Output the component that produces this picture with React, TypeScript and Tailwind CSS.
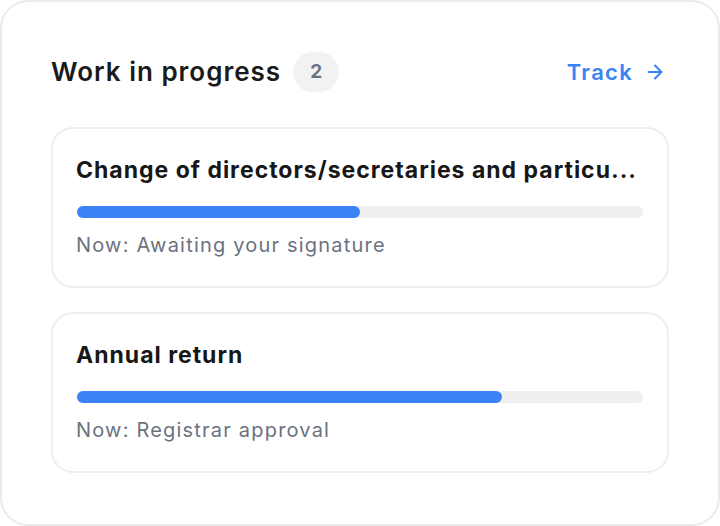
import { ArrowRight } from 'lucide-react'

const items = [
  { title: 'Change of directors/secretaries and particu...', status: 'Awaiting your signature', pct: 50 },
  { title: 'Annual return', status: 'Registrar approval', pct: 75 },
]

export default function App() {
  return (
    <div className="w-[720px] h-[526px] bg-white" style={{ fontFamily: 'Inter, "Noto Sans", sans-serif' }}>
      <div className="h-full box-border border-2 border-[#ebebeb] rounded-[28px] px-[49px] pt-[50px]">
        {/* Header */}
        <div className="flex items-center justify-between h-[40px]">
          <div className="flex items-center gap-[12px]">
            <h2 className="text-[26px] font-semibold text-[#1a1a1a] tracking-[1px] -mt-[2px]">Work in progress</h2>
            <span className="w-[46px] h-[40px] rounded-full bg-[#f2f2f2] flex items-center justify-center text-[19px] font-bold text-[#6b7280]">
              2
            </span>
          </div>
          <button className="flex items-center gap-[11px] text-[#3b82f6] text-[22px] font-semibold tracking-[1.3px] mr-[3px]">
            Track
            <ArrowRight className="w-[22px] h-[22px]" strokeWidth={2.25} />
          </button>
        </div>

        {/* Items */}
        <div className="mt-[35px] flex flex-col gap-[24px]">
          {items.map((item) => (
            <div key={item.title} className="border-2 border-[#eeeeee] rounded-[22px] h-[161px] box-border px-[23px] pt-[23px]">
              <div className="text-[23px] leading-[36px] font-bold text-[#171717] tracking-[1px] whitespace-nowrap">{item.title}</div>
              <div className="mt-[18px] h-[12px] rounded-full bg-[#efefef] mx-[1px]">
                <div className="h-[12px] rounded-full bg-[#3b82f6]" style={{ width: `${item.pct}%` }} />
              </div>
              <div className="mt-[13px] text-[20px] leading-[28px] text-[#6b7280] tracking-[1.2px]">Now: {item.status}</div>
            </div>
          ))}
        </div>
      </div>
    </div>
  )
}
